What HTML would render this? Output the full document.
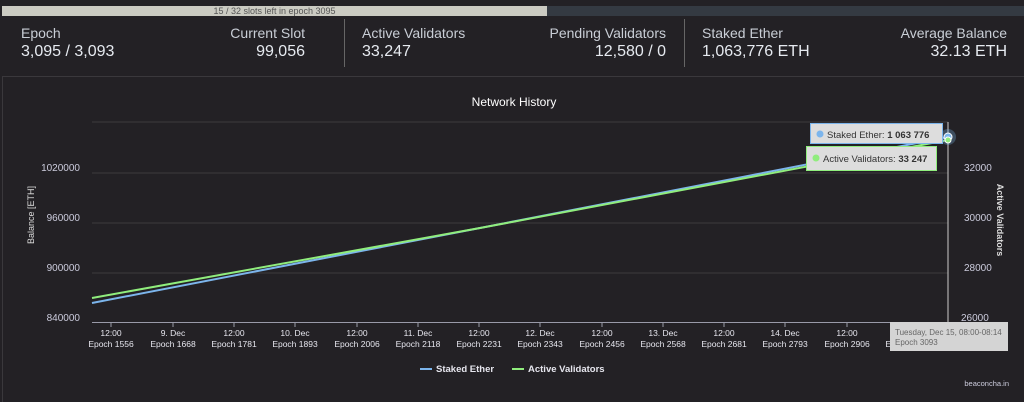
<!DOCTYPE html>
<html><head><style>
body{margin:0;width:1024px;height:402px;background:#232125;font-family:"Liberation Sans",sans-serif;color:#dfe3ea;overflow:hidden;position:relative}
.bar{position:absolute;left:2px;top:6px;width:1022px;height:10px;background:#343a42}
.fill{position:absolute;left:0;top:0;width:545px;height:10px;background:#cbcbc2;color:#555;font-size:9px;text-align:center;line-height:10px}
.c{position:absolute;top:25px;font-size:14px;color:#c9ced6}
.v{position:absolute;top:43px;font-size:16px;color:#e6eaf0}
.sep{position:absolute;top:19px;width:1px;height:48px;background:#666}
.hl{position:absolute;left:2px;right:0;top:76px;height:1px;background:#3a383c}
.lb{position:absolute;left:2px;top:76px;width:1px;bottom:0;background:#3a383c}
</style></head><body>
<div class="bar"><div class="fill">15 / 32 slots left in epoch 3095</div></div>
<div class="c" style="left:21px">Epoch</div><div class="v" style="left:21px">3,095 / 3,093</div>
<div class="c" style="right:719px">Current Slot</div><div class="v" style="right:719px">99,056</div>
<div class="sep" style="left:344px"></div>
<div class="c" style="left:362px">Active Validators</div><div class="v" style="left:362px">33,247</div>
<div class="c" style="right:358px">Pending Validators</div><div class="v" style="right:358px">12,580 / 0</div>
<div class="sep" style="left:684px"></div>
<div class="c" style="left:702px">Staked Ether</div><div class="v" style="left:702px">1,063,776 ETH</div>
<div class="c" style="right:17px">Average Balance</div><div class="v" style="right:17px">32.13 ETH</div>
<div class="hl"></div><div class="lb"></div>
<svg width="1024" height="402" style="position:absolute;left:0;top:0" font-family="Liberation Sans,sans-serif">
<text x="514" y="106" fill="#fff" font-size="12" text-anchor="middle">Network History</text>
<g stroke="#3e3a3d" stroke-width="1">
<line x1="92" y1="122" x2="948" y2="122"/><line x1="92" y1="173" x2="948" y2="173"/><line x1="92" y1="223" x2="948" y2="223"/><line x1="92" y1="273" x2="948" y2="273"/>
</g>
<line x1="92" y1="322.5" x2="948" y2="322.5" stroke="#999aa8"/>
<g fill="#ccd" font-size="10" text-anchor="end">
<text x="80" y="171">1020000</text><text x="80" y="221">960000</text><text x="80" y="271">900000</text><text x="80" y="321">840000</text>
</g>
<g fill="#ccd" font-size="10">
<text x="964" y="171">32000</text><text x="964" y="221">30000</text><text x="964" y="271">28000</text><text x="961" y="321">26000</text>
</g>
<text transform="translate(34,215) rotate(-90)" fill="#ddd" font-size="9" text-anchor="middle">Balance [ETH]</text>
<text transform="translate(997,220) rotate(90)" fill="#ddd" font-size="9" font-weight="bold" text-anchor="middle">Active Validators</text>
<g font-size="8.5" text-anchor="middle" fill="#e6e6ee">
<text x="111" y="336">12:00</text><text x="111" y="347">Epoch 1556</text>
<text x="173" y="336">9. Dec</text><text x="173" y="347">Epoch 1668</text>
<text x="234" y="336">12:00</text><text x="234" y="347">Epoch 1781</text>
<text x="295" y="336">10. Dec</text><text x="295" y="347">Epoch 1893</text>
<text x="357" y="336">12:00</text><text x="357" y="347">Epoch 2006</text>
<text x="418" y="336">11. Dec</text><text x="418" y="347">Epoch 2118</text>
<text x="479" y="336">12:00</text><text x="479" y="347">Epoch 2231</text>
<text x="540" y="336">12. Dec</text><text x="540" y="347">Epoch 2343</text>
<text x="602" y="336">12:00</text><text x="602" y="347">Epoch 2456</text>
<text x="663" y="336">13. Dec</text><text x="663" y="347">Epoch 2568</text>
<text x="724" y="336">12:00</text><text x="724" y="347">Epoch 2681</text>
<text x="785" y="336">14. Dec</text><text x="785" y="347">Epoch 2793</text>
<text x="847" y="336">12:00</text><text x="847" y="347">Epoch 2906</text>
<text x="908" y="336">15. Dec</text><text x="908" y="347">Epoch 3018</text>
</g>
<g stroke="#999aa8">
<line x1="111" y1="322" x2="111" y2="327"/><line x1="173" y1="322" x2="173" y2="327"/><line x1="234" y1="322" x2="234" y2="327"/><line x1="295" y1="322" x2="295" y2="327"/><line x1="357" y1="322" x2="357" y2="327"/><line x1="418" y1="322" x2="418" y2="327"/><line x1="479" y1="322" x2="479" y2="327"/><line x1="540" y1="322" x2="540" y2="327"/><line x1="602" y1="322" x2="602" y2="327"/><line x1="663" y1="322" x2="663" y2="327"/><line x1="724" y1="322" x2="724" y2="327"/><line x1="785" y1="322" x2="785" y2="327"/><line x1="847" y1="322" x2="847" y2="327"/><line x1="908" y1="322" x2="908" y2="327"/>
</g>
<line x1="948" y1="122" x2="948" y2="322" stroke="#ccc"/>
<path d="M92,303 L480,228 L948,137" stroke="#7cb5ec" stroke-width="2" fill="none"/>
<path d="M92,298 L480,228 L948,140" stroke="#90ed7d" stroke-width="2" fill="none"/>
<circle cx="948" cy="137" r="8" fill="#7cb5ec" opacity="0.3"/><circle cx="948" cy="137" r="4" fill="#7cb5ec" stroke="#fff"/>
<circle cx="948" cy="140" r="3" fill="#90ed7d" stroke="#fff"/>
<rect x="810.5" y="123.5" width="132" height="20" fill="#ddd" stroke="#7cb5ec"/>
<circle cx="820" cy="134" r="3.5" fill="#7cb5ec"/>
<text x="827" y="138" font-size="9.5" fill="#333">Staked Ether: <tspan font-weight="bold">1 063 776</tspan></text>
<rect x="806.5" y="146.5" width="130" height="24" fill="#ddd" stroke="#90ed7d"/>
<circle cx="816" cy="158" r="3.5" fill="#90ed7d"/>
<text x="823" y="162" font-size="9.5" fill="#333">Active Validators: <tspan font-weight="bold">33 247</tspan></text>
<rect x="890" y="322" width="118" height="29" fill="#d4d4d4"/>
<text x="895" y="335" font-size="8" fill="#666">Tuesday, Dec 15, 08:00-08:14</text>
<text x="895" y="345" font-size="8" fill="#666">Epoch 3093</text>
<line x1="420" y1="369" x2="432" y2="369" stroke="#7cb5ec" stroke-width="2"/>
<text x="436" y="372" font-size="9.5" font-weight="bold" fill="#e6e6ee">Staked Ether</text>
<line x1="512" y1="369" x2="524" y2="369" stroke="#90ed7d" stroke-width="2"/>
<text x="528" y="372" font-size="9.5" font-weight="bold" fill="#e6e6ee">Active Validators</text>
<text x="1009" y="386" font-size="7.5" fill="#ccd" text-anchor="end">beaconcha.in</text>
</svg>
</body></html>
